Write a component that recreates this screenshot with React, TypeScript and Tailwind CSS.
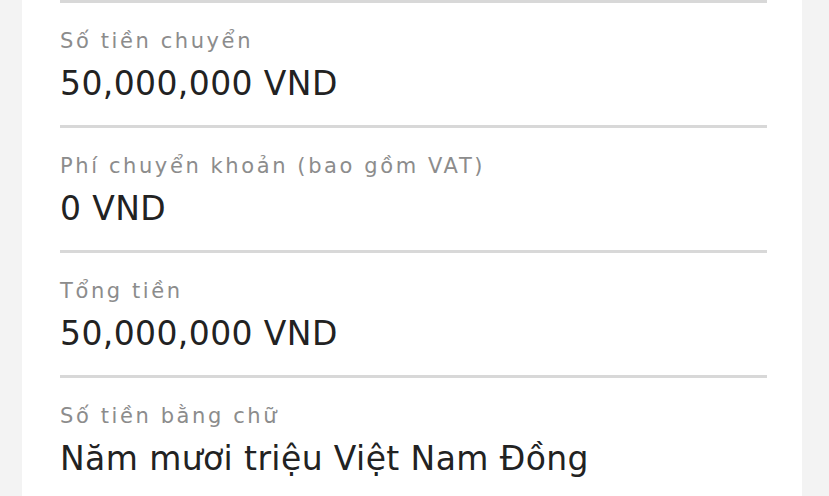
import React from "react";

const rows = [
  { label: "Số tiền chuyển", value: "50,000,000 VND" },
  { label: "Phí chuyển khoản (bao gồm VAT)", value: "0 VND" },
  { label: "Tổng tiền", value: "50,000,000 VND" },
  { label: "Số tiền bằng chữ", value: "Năm mươi triệu Việt Nam Đồng" },
];

export default function App() {
  return (
    <div
      className="flex h-[496px] w-[829px] overflow-hidden bg-[#f3f3f3] pl-[22px] pr-[27px]"
      style={{ fontFamily: "'DejaVu Sans', 'Noto Sans', sans-serif" }}
    >
      <div className="flex-1 bg-white pl-[38px] pr-[35px]">
        {rows.map((r, i) => (
          <div key={i} className="h-[125px] border-t-[3px] border-[#d8d8d8] pt-[25px]">
            <div className="text-[21px] leading-[26px] tracking-[2.6px] text-[#8c8c8c]">{r.label}</div>
            <div className="mt-[10px] text-[33px] leading-[40px] tracking-[0.4px] text-[#222222]">{r.value}</div>
          </div>
        ))}
      </div>
    </div>
  );
}
